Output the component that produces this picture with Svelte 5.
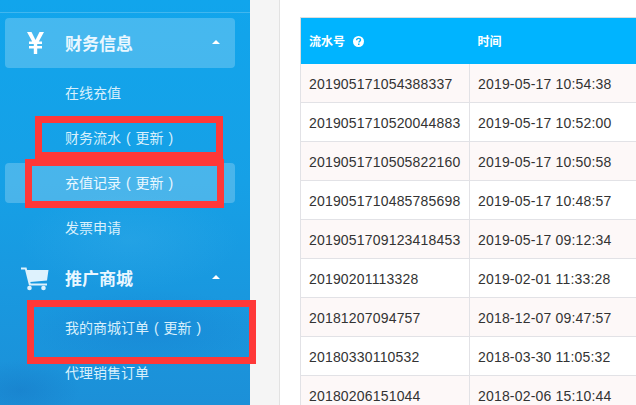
<script lang="ts">
	const groups = [
		{
			title: '财务信息',
			icon: 'yen',
			items: [
				{ label: '在线充值' },
				{ label: '财务流水', note: '( 更新 )' },
				{ label: '充值记录', note: '( 更新 )', active: true },
				{ label: '发票申请' },
			],
		},
		{
			title: '推广商城',
			icon: 'cart',
			items: [{ label: '我的商城订单', note: '( 更新 )' }, { label: '代理销售订单' }],
		},
	];

	const rows = [
		['201905171054388337', '2019-05-17 10:54:38'],
		['2019051710520044883', '2019-05-17 10:52:00'],
		['2019051710505822160', '2019-05-17 10:50:58'],
		['2019051710485785698', '2019-05-17 10:48:57'],
		['2019051709123418453', '2019-05-17 09:12:34'],
		['20190201113328', '2019-02-01 11:33:28'],
		['20181207094757', '2018-12-07 09:47:57'],
		['20180330110532', '2018-03-30 11:05:32'],
		['20180206151044', '2018-02-06 15:10:44'],
	];
</script>

<div class="page">
	<aside class="sidebar">
		<nav class="menu">
			{#each groups as group, g}
				<div class="group-head" class:open={g === 0}>
					<span class="group-icon">
						{#if group.icon === 'yen'}
							<svg width="17" height="22" viewBox="0 0 17 22">
								<path d="M0 0h4.500l4 8 4-8H17l-5.200 9.500H15V12h-4.800v2H15v2.500h-4.800V22H6.800v-5.500H2V14h4.800v-2H2V9.500h3.200z" fill="#fff" />
							</svg>
						{:else}
							<svg class="cart" width="28" height="24" viewBox="0 0 28 24">
								<path d="M0 .5h5.500l.6 2.500H27.500L26 13.500 9.300 15l.4 1.500H26v2H8L4 2.500H0z" fill="#def2fd" />
								<circle cx="8.500" cy="21" r="2.300" fill="#def2fd" />
								<circle cx="22.500" cy="21" r="2.300" fill="#def2fd" />
							</svg>
						{/if}
					</span>
					<span class="group-title">{group.title}</span>
					<span class="caret"></span>
				</div>
				{#each group.items as item}
					<div class="item" class:active={item.active}>
						<span>{item.label}</span>{#if item.note}<span class="note">{item.note}</span>{/if}
					</div>
				{/each}
			{/each}
		</nav>
	</aside>

	<div class="gutter"></div>

	<main class="content">
		<table>
			<colgroup>
				<col class="col-no" />
				<col class="col-time" />
			</colgroup>
			<thead>
				<tr>
					<th>
						流水号
						<svg class="help" width="11" height="11" viewBox="0 0 11 11">
							<circle cx="5.500" cy="5.500" r="5.500" fill="#fff" />
							<path d="M3.600 4.300c0-1.200.9-1.900 2-1.900s1.900.7 1.900 1.600c0 1.300-1.500 1.300-1.500 2.500" fill="none" stroke="#00b4ff" stroke-width="1.400" />
							<rect x="5" y="7.500" width="1.500" height="1.500" fill="#00b4ff" />
						</svg>
					</th>
					<th>时间</th>
				</tr>
			</thead>
			<tbody>
				{#each rows as row}
					<tr>
						<td>{row[0]}</td>
						<td>{row[1]}</td>
					</tr>
				{/each}
			</tbody>
		</table>
	</main>

	<div class="mark mark-1"></div>
	<div class="mark mark-2"></div>
	<div class="mark mark-3"></div>
</div>

<style>
	:global(body) {
		margin: 0;
		overflow: hidden;
	}

	.page {
		position: relative;
		display: flex;
		width: 636px;
		height: 405px;
		overflow: hidden;
		background: #fff;
		font-family: "Liberation Sans", "Noto Sans CJK SC", sans-serif;
	}

	.sidebar {
		flex: 0 0 250px;
		box-sizing: border-box;
		padding-top: 12px;
		background:
			radial-gradient(ellipse 60px 30px at 20px 390px, rgba(20, 110, 190, 0.35), transparent),
			radial-gradient(ellipse 120px 40px at 150px 330px, rgba(20, 110, 200, 0.25), transparent),
			radial-gradient(ellipse 110px 50px at 130px 240px, rgba(70, 180, 235, 0.25), transparent),
			linear-gradient(180deg, #11a5ec 0%, #16a0e6 45%, #1c90d8 100%);
	}

	.menu {
		display: flex;
		flex-direction: column;
		gap: 5px;
		padding: 5px 15px 0 5px;
		border-top: 1px solid rgba(255, 255, 255, 0.2);
	}

	.group-head {
		display: flex;
		align-items: center;
		height: 50px;
		border-radius: 4px;
		color: #fff;
	}

	.group-head.open {
		background: rgba(255, 255, 255, 0.22);
	}

	.group-icon {
		display: flex;
		justify-content: center;
		width: 60px;
	}

	.cart {
		margin-top: 2px;
	}

	.group-title {
		flex: 1;
		padding-bottom: 2px;
		font-size: 17px;
		font-weight: 700;
		color: #e9f7ff;
	}

	.caret {
		width: 0;
		height: 0;
		margin: 0 15px 2px 0;
		border: 4px solid transparent;
		border-top: 0;
		border-bottom-color: #fff;
	}

	.item {
		display: flex;
		align-items: center;
		box-sizing: border-box;
		height: 40px;
		padding: 0 0 2px 60px;
		border-radius: 4px;
		font-size: 14px;
		color: #d8f0fc;
	}

	.note {
		margin-left: 5px;
		word-spacing: 1px;
	}

	.item.active {
		background: rgba(255, 255, 255, 0.22);
		color: #eaf8ff;
	}

	.gutter {
		flex: 0 0 29px;
		background: #f5f5f5;
		border-right: 1px solid #e2e2e2;
	}

	.content {
		flex: 1;
		min-width: 0;
		padding: 17px 0 0 20px;
		overflow: hidden;
	}

	table {
		width: 500px;
		table-layout: fixed;
		border-collapse: collapse;
		border-top: 1px solid #ddd;
		border-left: 1px solid #ddd;
		color: #333;
		font-size: 14px;
		letter-spacing: 0.18px;
	}

	.col-no {
		width: 169px;
	}

	.col-time {
		width: 331px;
	}

	th {
		height: 44px;
		padding: 0 8px 2px;
		background: #00b4ff;
		color: #fff;
		font-size: 12px;
		font-weight: 700;
		text-align: left;
		letter-spacing: 0;
	}

	.help {
		margin-left: 5px;
		vertical-align: -1px;
	}

	td {
		height: 37px;
		padding: 1px 8px 0;
		border: 1px solid #e2e2e6;
		border-top: 0;
		white-space: nowrap;
	}

	tbody tr:nth-child(odd) {
		background: #fdf8f8;
	}

	.mark {
		position: absolute;
		box-sizing: border-box;
		border: 7px solid #ff3838;
	}

	.mark-1 {
		left: 35px;
		top: 116px;
		width: 188px;
		height: 43px;
	}

	.mark-2 {
		left: 25px;
		top: 159px;
		width: 199px;
		height: 49px;
	}

	.mark-3 {
		left: 27px;
		top: 300px;
		width: 229px;
		height: 64px;
	}
</style>
